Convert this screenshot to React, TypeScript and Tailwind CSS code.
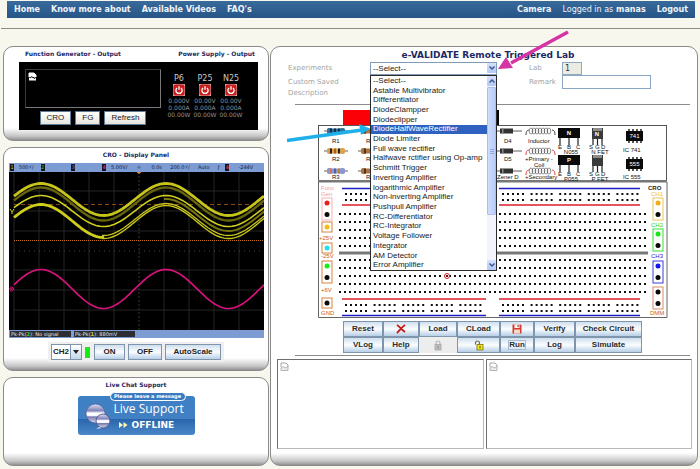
import { useState, type ReactNode } from "react";
import clsx from "clsx";

const EXPERIMENTS = [
  "--Select--",
  "Astable Multivibrator",
  "Differentiator",
  "DiodeClampper",
  "Diodeclipper",
  "DiodeHalfWaveRectifier",
  "Diode Limiter",
  "Full wave rectifier",
  "Halfwave rctifier using Op-amp",
  "Schmitt Trigger",
  "Inverting Amplifier",
  "logarithmic Amplifier",
  "Non-inverting Amplifier",
  "Pushpull Amplifier",
  "RC-Differentiator",
  "RC-Integrator",
  "Voltage Follower",
  "Integrator",
  "AM Detector",
  "Error Amplifier",
];

const SUPPLIES = [
  { name: "P6", values: ["0.000V", "0.000A", "00.00W"] },
  { name: "P25", values: ["00.00V", "0.000A", "00.00W"] },
  { name: "N25", values: ["00.00V", "0.000A", "00.00W"] },
];

function Card({ children, className }: { children: ReactNode; className?: string }) {
  return (
    <section
      className={clsx(
        "flex flex-col rounded-[10px] border border-[#8a8a8a] bg-[linear-gradient(to_top,#929292_0px,#c6c6c6_4px,#ffffff_12px)] pt-px",
        className
      )}
    >
      {children}
    </section>
  );
}

function CardTitle({ children }: { children: ReactNode }) {
  return (
    <h2 className="text-center text-[6px] leading-[12px] font-bold text-[#1b2a63]">
      {children}
    </h2>
  );
}

function TopNav() {
  return (
    <nav className="mr-[5px] ml-[7px] flex h-[17px] items-center justify-between bg-linear-to-b from-[#386a9b] to-[#265587] px-[7px] text-[8px] font-bold text-[#eef4fa]">
      <div className="flex gap-[11px]">
        <a href="#home">Home</a>
        <a href="#about">Know more about</a>
        <a href="#videos">Available Videos</a>
        <a href="#faq">FAQ's</a>
      </div>
      <div className="flex gap-[11px]">
        <a href="#camera">Camera</a>
        <span>
          <span className="font-normal">Logged in as</span> manas
        </span>
        <a href="#logout">Logout</a>
      </div>
    </nav>
  );
}

function PowerIcon() {
  return (
    <svg viewBox="0 0 12 12" className="size-3">
      <rect width="12" height="12" fill="#d9a0a0" />
      <rect x="0.5" y="0.5" width="11" height="11" rx="2" fill="#c81e1e" />
      <path d="M4 4a3.1 3.1 0 1 0 4 0M6 2.2v3.6" fill="none" stroke="#fff" strokeWidth="1.3" />
    </svg>
  );
}

function BrokenImage({ dark }: { dark?: boolean }) {
  return (
    <svg viewBox="0 0 9 10" className="h-[10px] w-[9px]" aria-hidden>
      <path
        d="M1 5V1h5l2 2v2"
        fill={dark ? "#fff" : "none"}
        stroke={dark ? "#fff" : "#a5a5a5"}
      />
      <path d="M1 6l2-1.5L5 6l3-1.5V8.5H1z" fill={dark ? "#fff" : "#ececec"} stroke={dark ? "none" : "#a5a5a5"} strokeWidth="0.8" />
      {dark && <path d="M2 6l2-1.5 2 2 2-1" stroke="#111" fill="none" />}
    </svg>
  );
}

function OutputCard() {
  return (
    <Card className="pb-[10px]">
      <div className="flex justify-between pr-[13px] pl-[21px]">
        <CardTitle>Function Generator - Output</CardTitle>
        <CardTitle>Power Supply - Output</CardTitle>
      </div>
      <div className="mt-[2px] mr-[10px] ml-[15px] flex h-[68px] justify-between bg-black pr-[14px] pl-[6px]">
        <div className="w-[136px] pt-[7px]">
          <div className="h-[39px] border border-[#777] border-t-[#3c3c3c] border-l-[#3c3c3c] p-[2px]">
            <BrokenImage dark />
          </div>
          <div className="mt-[3px] flex justify-center gap-1 font-['Liberation_Sans',Arial,sans-serif] text-[8px] leading-none text-[#222]">
            {["CRO", "FG", "Refresh"].map((label) => (
              <button
                key={label}
                className="h-[14px] border border-[#5b7b99] bg-linear-to-b from-white to-[#e6e4dc] px-[6px]"
              >
                {label}
              </button>
            ))}
          </div>
        </div>
        <div className="grid grid-cols-[26px_26px_26px] pt-[12px] text-center">
          {SUPPLIES.map((s) => (
            <div key={s.name} className="flex flex-col items-center">
              <span className="text-[8px] leading-[10px] text-[#c9c9c9]">{s.name}</span>
              <button aria-label={`Toggle ${s.name}`}>
                <PowerIcon />
              </button>
              <div className="mt-px text-[6px] leading-[7px] whitespace-nowrap text-[#929292]">
                {s.values.map((v) => (
                  <div key={v}>{v}</div>
                ))}
              </div>
            </div>
          ))}
        </div>
      </div>
    </Card>
  );
}

function sine(center: number, amp: number, from = 5, to = 255) {
  let d = "";
  for (let x = from; x <= to; x += 2) {
    const y = center - amp * Math.cos(((x - 32) / 125) * 2 * Math.PI);
    d += `${d ? "L" : "M"}${x} ${y.toFixed(2)}`;
  }
  return d;
}

function Channel({ n, className }: { n: number; className: string }) {
  return <span className={clsx("mr-[5px] inline-block w-1 bg-[#15151d] text-center", className)}>{n}</span>;
}

function ScopeScreen() {
  return (
    <div className="mr-1 ml-[5px] text-[5px] leading-[7px] text-[#14203c]">
      <div className="grid h-[9px] grid-cols-[31fr_31fr_31fr_25fr_14fr_21fr_28fr_20fr_10fr_44fr] items-center bg-[#7c9cd3] px-px whitespace-nowrap">
        <span><Channel n={1} className="text-[#c9c83a]" />500⚡/</span>
        <span><Channel n={2} className="text-[#39c339]" /></span>
        <span><Channel n={3} className="text-[#5c7cff]" /></span>
        <span><Channel n={4} className="text-[#ff3b8d]" />5.00V/</span>
        <span className="text-right">☼</span>
        <span className="text-right">0.0s</span>
        <span className="text-right">200.0⚡/</span>
        <span className="text-right">Auto</span>
        <span className="text-right">ƒ</span>
        <span className="pl-[6px]"><Channel n={4} className="text-[#ff3b8d]" /><span className="pl-1">-244V</span></span>
      </div>
      <svg viewBox="0 0 255 158" preserveAspectRatio="none" className="block h-[158px] w-full bg-black">
        <g stroke="#2e2e2e" strokeWidth="0.8">
          {[5, 30, 55, 80, 105, 155, 180, 205, 230].map((x) => (
            <path key={x} d={`M${x} 0V158`} />
          ))}
          {[19, 39, 59, 98, 118, 138].map((y) => (
            <path key={y} d={`M5 ${y}H255`} />
          ))}
          <path d="M130 0V158" stroke="#444" strokeDasharray="2 2" />
          <path d="M5 79H255" stroke="#555" strokeDasharray="1 4" />
        </g>
        <path d="M127.500 0h5l-2.500 2z" fill="#f28a1c" />
        <path d="M5 32.500H255" stroke="#8a4a12" strokeDasharray="4 3" />
        <path d="M5 68.500H255" stroke="#c96f1c" strokeDasharray="1 1" />
        <g fill="none">
          <path d={sine(27.5, 16)} stroke="#c7c51c" strokeWidth="2.800" />
          <path d={sine(32, 16.5)} stroke="#66640c" strokeWidth="2.400" />
          <path d={sine(39, 15.5)} stroke="#cfcd1e" strokeWidth="1.600" />
          <path d={sine(43, 16, 155)} stroke="#77750f" strokeWidth="2" />
          <path d={sine(49, 16.5, 5, 95)} stroke="#cfcd1e" strokeWidth="2.800" />
          <path d={sine(47.5, 16, 93)} stroke="#c7c51c" strokeWidth="1.300" />
          <path d={sine(50, 16.5, 93)} stroke="#c7c51c" strokeWidth="1.400" />
          <path d="M1 37l2 3 2-3M3 40v2" stroke="#cfcd1e" />
          <path d={sine(117, 19.500)} stroke="#d8127c" strokeWidth="1.700" />
          <path d="M0 117h4M2 114v6M3 115l2 2-2 2" stroke="#d8127c" />
        </g>
      </svg>
      <div className="flex h-2 items-center gap-[3px] bg-[#7c9cd3] pl-px text-[#e8e8e8]">
        <span className="h-[6px] w-[61px] bg-[#2b2e33] pl-px leading-[6px]">
          Pk-Pk(<b className="text-[#37cf37]">2</b>): No signal
        </span>
        <span className="h-[6px] w-[61px] bg-[#2b2e33] pl-px leading-[6px]">
          Pk-Pk(<b className="text-[#d6d33a]">1</b>): 880mV
        </span>
      </div>
    </div>
  );
}

const appletButton = "border border-[#7f95ac] bg-linear-to-b from-[#cfdfee] via-[#fbfdff] to-[#b7cfe6]";

function DisplayPanel() {
  return (
    <Card className="pb-2">
      <CardTitle>CRO - Display Panel</CardTitle>
      <div className="mt-[2px]">
        <ScopeScreen />
      </div>
      <div className="mx-auto mt-1 flex h-[20px] items-center gap-[3px] bg-[#efefef] px-[3px] font-['Liberation_Sans',Arial,sans-serif] text-[8px] leading-none font-bold text-[#222]">
        <div className="relative h-4 w-[31px]">
          <select
            aria-label="Channel"
            defaultValue="CH2"
            className="h-4 w-full appearance-none border border-[#7f95ac] bg-white pl-px"
          >
            <option>CH1</option>
            <option>CH2</option>
          </select>
          <span className="pointer-events-none absolute inset-y-px right-px flex w-[11px] items-center justify-center border-l border-[#7f95ac] bg-linear-to-b from-white to-[#c3d7ea]">
            <svg viewBox="0 0 6 4" className="h-1 w-[6px]">
              <path d="M0 0h6L3 4z" fill="#222" />
            </svg>
          </span>
        </div>
        <span className="mr-px h-[11px] w-[5px] border border-[#4cc94c] bg-[#0df20d]" />
        <button className={clsx(appletButton, "h-4 w-[31px]")}>ON</button>
        <button className={clsx(appletButton, "h-4 w-[34px]")}>OFF</button>
        <button className={clsx(appletButton, "h-4 w-[56px]")}>AutoScale</button>
      </div>
    </Card>
  );
}

function LiveChat() {
  return (
    <Card className="flex-1">
      <CardTitle>Live Chat Support</CardTitle>
      <a
        href="#chat"
        className="relative mx-auto mt-[5px] flex h-[39px] w-[117px] items-center gap-[3px] rounded-[3px] bg-[linear-gradient(to_bottom,#3f7fc4_0%,#4180c3_58%,#2a66ad_60%,#4b88c8_100%)] pl-[7px] text-white"
      >
        <span className="absolute -top-1 right-[9px] flex h-[9px] w-[76px] items-center justify-center rounded-full border border-white bg-[#3c7abf] text-[5px] leading-none font-bold whitespace-nowrap">
          Please leave a message
        </span>
        <svg viewBox="0 0 26 26" className="size-[26px] shrink-0">
          <defs>
            <linearGradient id="bubble" x1="0" y1="0" x2="0" y2="1">
              <stop offset="0" stopColor="#dfe2f2" />
              <stop offset="0.35" stopColor="#7f83b8" />
              <stop offset="0.48" stopColor="#ffffff" />
              <stop offset="0.6" stopColor="#ffffff" />
              <stop offset="0.68" stopColor="#777bb0" />
              <stop offset="1" stopColor="#dcdff0" />
            </linearGradient>
          </defs>
          <circle cx="10.500" cy="10.500" r="9.500" fill="url(#bubble)" stroke="#5c5f98" strokeWidth="0.700" />
          <circle cx="18" cy="18" r="7" fill="url(#bubble)" stroke="#4d5088" strokeWidth="0.900" />
          <path d="M14 24l-3 2 6-1z" fill="#d5d8ec" />
        </svg>
        <span className="flex flex-col pt-px">
          <span className="font-['Open_Sans',sans-serif] text-[12px] leading-[15px] whitespace-nowrap">Live Support</span>
          <span className="flex items-center gap-[4px] pt-[3px] pl-[5px] text-[9px] leading-[12px] font-bold">
            <svg viewBox="0 0 9 6" className="h-[6px] w-[9px]">
              <path d="M0 0l4 3-4 3zM4.500 0l4 3-4 3z" fill="#fff6b0" />
            </svg>
            OFFLINE
          </span>
        </span>
      </a>
    </Card>
  );
}

function ChevronBox({ up }: { up?: boolean }) {
  return (
    <span className="flex h-[10px] w-[9px] items-center justify-center rounded-[1px] bg-linear-to-b from-[#d5e1fd] to-[#b3c8f7]">
      <svg viewBox="0 0 6 4" className="h-1 w-[6px]">
        <path d={up ? "M0.500 3.500L3 1l2.500 2.500" : "M0.500 0.500L3 3l2.500-2.500"} fill="none" stroke="#3d5288" strokeWidth="1.400" />
      </svg>
    </span>
  );
}

function ExperimentPicker() {
  const [active, setActive] = useState("DiodeHalfWaveRectifier");

  return (
    <div className="relative w-[127px] font-['Liberation_Sans',Arial,sans-serif] text-[8px] text-[#1a1a1a]">
      <select
        id="experiment"
        defaultValue="--Select--"
        className="block h-[13px] w-full appearance-none border border-[#7f9db9] bg-white pl-[2px] leading-[11px]"
      >
        {EXPERIMENTS.map((name) => (
          <option key={name}>{name}</option>
        ))}
      </select>
      <span className="pointer-events-none absolute top-px right-px">
        <ChevronBox />
      </span>

      <div className="absolute top-[13px] left-0 z-10 flex h-[196px] w-full border border-[#2b2b2b] bg-white">
        <ul role="listbox" aria-label="Experiments" className="flex flex-1 flex-col">
          {EXPERIMENTS.map((name) => (
            <li
              key={name}
              role="option"
              aria-selected={name === active}
              onMouseEnter={() => setActive(name)}
              className={clsx(
                "flex min-h-0 flex-1 items-center pl-[2px] leading-none whitespace-nowrap",
                name === active && "bg-[#2f62c0] text-white"
              )}
            >
              {name}
            </li>
          ))}
        </ul>
        <div className="flex w-[9px] flex-col justify-between bg-[#f3f4fb]">
          <div>
            <ChevronBox up />
            <div className="mt-px flex h-[128px] flex-col items-center justify-center gap-px rounded-[1px] border border-[#a9bdf0] bg-linear-to-r from-[#cfddfd] to-[#b9cdf9]">
              <span className="h-px w-1 bg-[#8fa9e6]" />
              <span className="h-px w-1 bg-[#8fa9e6]" />
              <span className="h-px w-1 bg-[#8fa9e6]" />
            </div>
          </div>
          <ChevronBox />
        </div>
      </div>

      <svg viewBox="0 0 72 44" className="absolute -top-8 left-[127px] z-20 h-[44px] w-[72px]" aria-hidden>
        <path d="M71 2L14 33" stroke="#d633a5" strokeWidth="3.500" />
        <path d="M1 39L9 27l7 11z" fill="#d633a5" />
      </svg>
      <svg viewBox="0 0 86 26" className="absolute top-[58px] -left-[84px] z-20 h-[26px] w-[86px]" aria-hidden>
        <path d="M1 20.500L76 10" stroke="#1fb0ea" strokeWidth="3.500" />
        <path d="M84 8.500L73 4l2 11z" fill="#1fb0ea" />
      </svg>
    </div>
  );
}

function Resistor({ x, y, body, bands }: { x: number; y: number; body: string; bands: string[] }) {
  return (
    <g>
      <path d={`M${x - 12} ${y}h24`} stroke="#8a7a6a" strokeWidth="1.200" />
      <rect x={x - 9} y={y - 2.5} width="18" height="5" rx="2" fill={body} />
      <rect x={x - 9} y={y - 3} width="5" height="6" rx="2" fill={body} />
      <rect x={x + 4} y={y - 3} width="5" height="6" rx="2" fill={body} />
      {bands.map((c, i) => (
        <rect key={i} x={x - 6 + i * 4} y={y - 2.5} width="2" height="5" fill={c} />
      ))}
    </g>
  );
}

function Diode({ y }: { y: number }) {
  return (
    <g>
      <path d={`M494 ${y}h28`} stroke="#777" strokeWidth="1.200" />
      <rect x="500" y={y - 2.5} width="13" height="5" fill="#333" />
      <rect x="502" y={y - 2.5} width="1.500" height="5" fill="#888" />
    </g>
  );
}

function Coil({ y, ends }: { y: number; ends: string }) {
  return (
    <g fill="none" stroke="#444" strokeWidth="0.600">
      {[0, 1, 2, 3, 4, 5, 6].map((i) => (
        <ellipse key={i} cx={531 + i * 3} cy={y} rx="1.800" ry="3" />
      ))}
      <path d={`M529 ${y - 1}q-3 0-3 5M552 ${y - 1}q3 0 3 5`} stroke={ends} strokeWidth="0.900" />
    </g>
  );
}

function Transistor({ y, letter, name }: { y: number; letter: string; name: string }) {
  return (
    <g>
      <path d={`M560 ${y + 9}v8M569 ${y + 9}v8M578 ${y + 9}v8`} stroke="#222" strokeWidth="1.200" />
      <rect x="558" y={y} width="22" height="10" fill="#0a0a0a" />
      <text x="569" y={y + 7} fill="#fff" fontWeight="bold" textAnchor="middle">{letter}</text>
      <text x="558" y={y + 21}>E</text>
      <text x="567" y={y + 21}>B</text>
      <text x="576" y={y + 21}>C</text>
      <text x="571" y={y + 26} textAnchor="middle">{name}</text>
    </g>
  );
}

function Fet({ y, letter, name }: { y: number; letter: string; name: string }) {
  return (
    <g>
      <path d={`M593 ${y + 9}v8M597.500 ${y + 9}v8M602 ${y + 9}v8`} stroke="#222" strokeWidth="1.200" />
      <rect x="592" y={y} width="11" height="11" fill="#3a3a3a" />
      <rect x="593" y={y} width="9" height="3" fill="#8c8c8c" />
      <text x="597" y={y + 8} fill="#fff" fontWeight="bold" textAnchor="middle">{letter}</text>
      <text x="589" y={y + 21}>S</text>
      <text x="595" y={y + 21}>G</text>
      <text x="601" y={y + 21}>D</text>
      <text x="600" y={y + 26} textAnchor="middle">{name}</text>
    </g>
  );
}

function Chip({ y, name }: { y: number; name: string }) {
  return (
    <g>
      <path d={`M629 ${y - 2}v14M633 ${y - 2}v14M637 ${y - 2}v14M641 ${y - 2}v14`} stroke="#222" strokeWidth="1.500" />
      <rect x="626" y={y} width="17" height="10" fill="#0a0a0a" />
      <text x="634.500" y={y + 7} fill="#fff" textAnchor="middle">{name}</text>
    </g>
  );
}

function Terminal({ x, y, stroke, dots }: { x: number; y: number; stroke: string; dots: string[] }) {
  return (
    <g>
      <rect x={x - 5} y={y} width="10" height={dots.length > 1 ? 22 : 10} fill="none" stroke={stroke} />
      {dots.map((c, i) => (
        <circle key={i} cx={x} cy={y + 5 + i * 11.5} r="2.500" fill={c} />
      ))}
    </g>
  );
}

const BUS_DASH = "2 3 2 3 2 3 2 3 2 6.6";

function Breadboard() {
  return (
    <svg viewBox="318 109 350 210" className="mx-auto block w-[350px] max-w-full font-['Liberation_Sans',Arial,sans-serif] text-[6px]">
      <rect x="343" y="110" width="78" height="15" fill="#fb0007" />
      <rect x="421" y="110" width="78" height="15" fill="#050505" />
      <rect x="318.500" y="125.500" width="348" height="56" fill="#fff" stroke="#555" />
      <rect x="318" y="180" width="349" height="2.500" fill="#777" />
      <path d="M318.500 182V317.500H667V182" fill="none" stroke="#666" />

      <Resistor x={336} y={131} body="#2c6f9c" bands={["#12304a", "#12304a", "#12304a"]} />
      <Resistor x={336} y={151} body="#d8a350" bands={["#222", "#b45c10", "#222"]} />
      <Resistor x={336} y={171} body="#8c97cf" bands={["#d47a4a", "#565fa5", "#b9863d"]} />
      <Resistor x={370} y={131} body="#a9764a" bands={["#5d3014"]} />
      <Resistor x={370} y={151} body="#a9764a" bands={["#5d3014"]} />
      <Resistor x={370} y={171} body="#a9764a" bands={["#5d3014"]} />
      <g fill="#111">
        <text x="332" y="143">R1</text>
        <text x="332" y="161">R2</text>
        <text x="332" y="179">R3</text>
        <text x="366" y="143">R4</text>
        <text x="366" y="161">R5</text>
        <text x="366" y="179">R6</text>
        <Diode y={131} />
        <Diode y={151} />
        <Diode y={171} />
        <text x="504" y="143">D4</text>
        <text x="504" y="161">D5</text>
        <text x="497" y="179">Zener D</text>
        <Coil y={131} ends="#333" />
        <Coil y={151} ends="#d33" />
        <Coil y={171} ends="#d33" />
        <text x="528" y="143">Inductor</text>
        <text x="525" y="161">+Primary  -</text>
        <text x="534" y="167">Coil</text>
        <text x="525" y="179">+Secondary</text>
        <Transistor y={128} letter="N" name="N055" />
        <Transistor y={155} letter="P" name="P055" />
        <Fet y={128} letter="N" name="N FET" />
        <Fet y={155} letter="" name="P FET" />
        <Chip y={131} name="741" />
        <Chip y={159} name="555" />
        <text x="623" y="152">IC 741</text>
        <text x="623" y="179">IC 555</text>
      </g>

      {/* power rails */}
      <path d="M342 188.500H486M499 188.500H640M342 315.500H486M499 315.500H640" stroke="#1d1dc4" strokeWidth="1.300" />
      <path d="M342 205H486M499 205H640M342 299H486M499 299H640" stroke="#dc1f26" strokeWidth="1.300" />
      <g stroke="#111" strokeWidth="2">
        {[194, 200, 305, 311].map((y) => (
          <path key={y} d={`M345 ${y}H482M502 ${y}H639`} strokeDasharray={BUS_DASH} />
        ))}
        {[214, 222, 230, 238, 246, 260, 268, 276, 284, 292].map((y) => (
          <path key={y} d={`M339 ${y}H648`} strokeDasharray="2 3" />
        ))}
      </g>
      <rect x="339" y="251.500" width="309" height="3" fill="#777" />
      <circle cx="447" cy="276" r="2.500" fill="#fff" stroke="#c22" />
      <path d="M446 275l2 2m0-2l-2 2" stroke="#611" />

      <g fill="#f0a0a0">
        <text x="321" y="190">Func</text>
        <text x="321" y="196">Gen</text>
      </g>
      <Terminal x={327} y={198} stroke="#f3b4b4" dots={["#ee1c1c", "#0a0a0a"]} />
      <Terminal x={327} y={222} stroke="#d8823f" dots={["#f2bd16"]} />
      <Terminal x={327} y={243} stroke="#d8823f" dots={["#25dff0"]} />
      <Terminal x={327} y={261} stroke="#d8823f" dots={["#16ee16", "#0a0a0a"]} />
      <Terminal x={327} y={298} stroke="#d8823f" dots={["#0a0a0a"]} />
      <g fill="#cf5a22">
        <text x="319" y="240">+25V</text>
        <text x="321" y="258">-25V</text>
        <text x="321" y="292">+6V</text>
        <text x="321" y="315">GND</text>
        <text x="650" y="315">DMM</text>
      </g>
      <text x="648" y="190" fontWeight="bold" fill="#222">CRO</text>
      <text x="651" y="196" fill="#f0b93a">CH1</text>
      <text x="651" y="227" fill="#20d820">CH2</text>
      <text x="651" y="258" fill="#2828e0">CH3</text>
      <Terminal x={658} y={198} stroke="#eec25a" dots={["#f0ae14", "#0a0a0a"]} />
      <Terminal x={658} y={229} stroke="#35dd35" dots={["#18e618", "#0a0a0a"]} />
      <Terminal x={658} y={261} stroke="#3c3ce0" dots={["#1515ee", "#0a0a0a"]} />
      <Terminal x={658} y={287} stroke="#d98a60" dots={["#0a0a0a", "#0a0a0a"]} />
    </svg>
  );
}

function DeleteIcon() {
  return (
    <svg viewBox="0 0 10 10" className="size-[10px]">
      <path d="M1 1c3 2 5 5 8 7M9 1C6 3 4 6 1 9" fill="none" stroke="#c41a1a" strokeWidth="1.800" />
    </svg>
  );
}

function SaveIcon() {
  return (
    <svg viewBox="0 0 10 10" className="size-[10px]">
      <path d="M0.500 0.500H8.500L9.500 1.500V9.500H0.500z" fill="#d63c2c" />
      <rect x="2.500" y="0.500" width="5" height="3.500" fill="#fff" />
      <rect x="5.500" y="1" width="1.200" height="2.200" fill="#b33" />
      <rect x="2" y="5.500" width="6" height="4" fill="#f3d9c9" />
    </svg>
  );
}

function LockIcon({ open }: { open?: boolean }) {
  return (
    <svg viewBox="0 0 10 11" className="h-[11px] w-[10px]">
      <path
        d={open ? "M1.500 4.500V3a2 2 0 0 1 4 0v2" : "M3 5V3a2 2 0 0 1 4 0v2"}
        fill="none"
        stroke={open ? "#6d6d4c" : "#b5b5b5"}
        strokeWidth="1.200"
      />
      <rect x={open ? 3 : 2} y="4.500" width="6" height="5.500" fill={open ? "#f4e61d" : "#bdbdbd"} stroke={open ? "#77701a" : "#a9a9a9"} strokeWidth="0.800" />
      <path d={open ? "M6 6v2.500" : "M5 6v2.500"} stroke={open ? "#55500f" : "#8f8f8f"} />
    </svg>
  );
}

const TOOLBAR: { name: string; icon?: ReactNode; disabled?: boolean; focused?: boolean }[] = [
  { name: "Reset" },
  { name: "Delete", icon: <DeleteIcon /> },
  { name: "Load" },
  { name: "CLoad" },
  { name: "Save", icon: <SaveIcon /> },
  { name: "Verify" },
  { name: "Check Circuit" },
  { name: "VLog" },
  { name: "Help" },
  { name: "Lock", icon: <LockIcon />, disabled: true },
  { name: "Unlock", icon: <LockIcon open /> },
  { name: "Run", focused: true },
  { name: "Log" },
  { name: "Simulate" },
];

function Toolbar() {
  return (
    <div className="mx-auto mt-[2px] grid w-[299px] max-w-full grid-cols-[40fr_36fr_38fr_43fr_34fr_41fr_67fr] font-['Liberation_Sans',Arial,sans-serif] text-[8px] leading-none font-bold text-[#2a2a2a]">
      {TOOLBAR.map((item) => (
        <button
          key={item.name}
          disabled={item.disabled}
          aria-label={item.name}
          className={clsx(
            "flex h-4 items-center justify-center",
            item.disabled ? "bg-[#ededed]" : appletButton
          )}
        >
          {item.icon ?? <span className={clsx(item.focused && "border border-[#a9bdd4]")}>{item.name}</span>}
        </button>
      ))}
    </div>
  );
}

function LabForm() {
  return (
    <form className="ml-[17px] grid grid-cols-[82px_159px_33px_89px] grid-rows-[13px_14px_8px] items-center text-[7px] leading-none text-[#a3a3a3]">
      <label htmlFor="experiment">Experiments</label>
      <ExperimentPicker />
      <label htmlFor="lab">Lab</label>
      <input
        id="lab"
        defaultValue="1"
        readOnly
        className="h-[13px] w-5 border border-[#8fa9c0] bg-[#ebebe4] pl-[2px] text-[8px] text-[#333]"
      />
      <span className="col-span-2">Custom Saved</span>
      <label htmlFor="remark">Remark</label>
      <input id="remark" className="h-[14px] w-full border border-[#8aa7c4] bg-white px-[2px] text-[8px] text-[#333]" />
      <span className="col-span-4">Description</span>
    </form>
  );
}

function OutputFrame() {
  return (
    <div className="h-[90px] flex-1 border border-[#b9b9b9] border-t-[#6e6e6e] border-l-[#6e6e6e] bg-white p-[2px]">
      <BrokenImage />
    </div>
  );
}

function LabCard() {
  return (
    <Card className="pb-4">
      <h1 className="pt-px pl-2 text-center text-[9px] leading-[13px] font-bold text-[#1b2a63]">
        e-VALIDATE Remote Triggered Lab
      </h1>
      <LabForm />
      <hr className="mt-[7px] mr-[7px] ml-[24px] border-[#8c8c8c]" />
      <div className="mt-1 mr-[7px] ml-[24px]">
        <Breadboard />
        <Toolbar />
      </div>
      <hr className="mt-[2px] mr-[7px] ml-[24px] border-[#8c8c8c]" />
      <div className="mt-[3px] mr-[5px] ml-[6px] flex gap-[2px]">
        <OutputFrame />
        <OutputFrame />
      </div>
    </Card>
  );
}

export default function App() {
  return (
    <div className="min-h-screen bg-[#f8f7ee] pt-px font-['DejaVu_Sans',Verdana,sans-serif]">
      <TopNav />
      <hr className="mt-[10px] ml-px border-[#8c8c86]" />
      <main className="mt-[17px] grid grid-cols-[266fr_428fr] gap-px pr-[2px] pl-[3px]">
        <div className="flex flex-col gap-[6px]">
          <OutputCard />
          <DisplayPanel />
          <LiveChat />
        </div>
        <LabCard />
      </main>
    </div>
  );
}
